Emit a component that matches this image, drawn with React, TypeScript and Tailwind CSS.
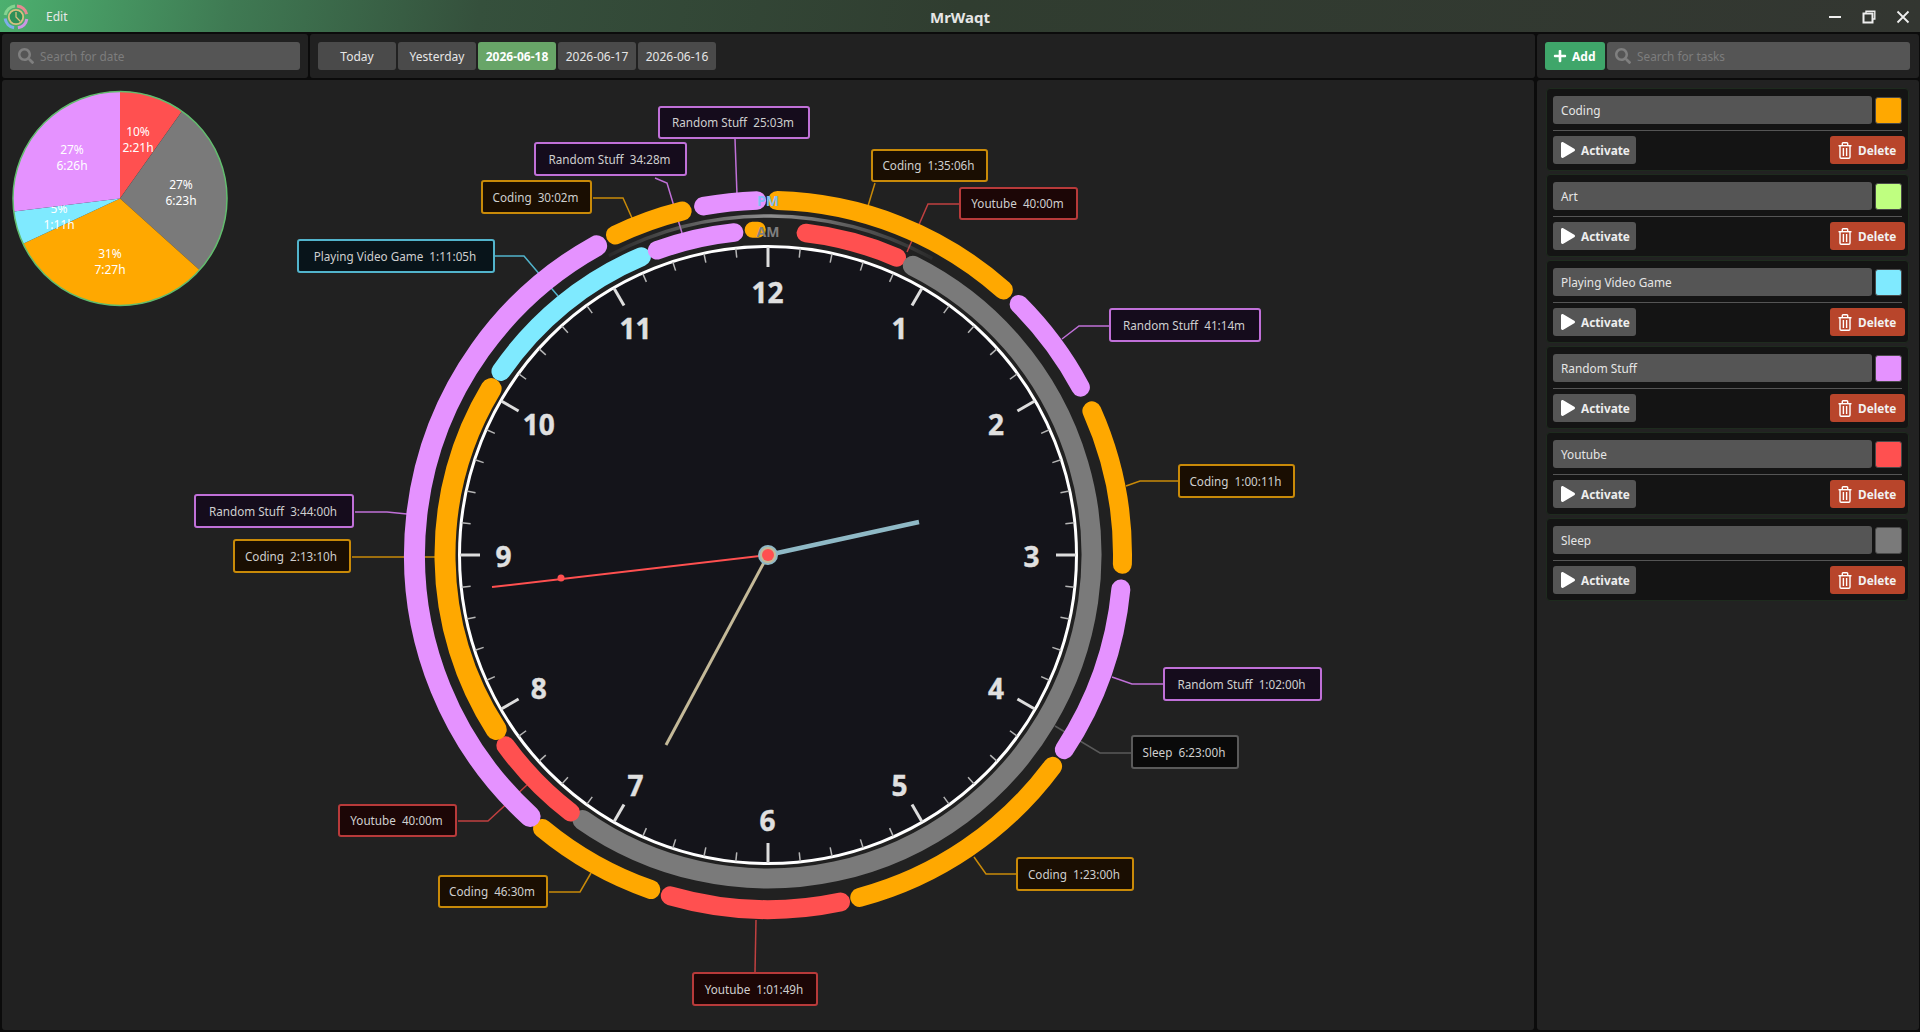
import { FaSearch, FaPlus, FaPlay } from "react-icons/fa";

const CX = 768;
const CY = 555;
const ORANGE = "#ffa800";
const PURPLE = "#e592ff";
const CYAN = "#7feaff";
const RED = "#ff5050";
const GRAY = "#7a7a7a";

const polar = (r: number, deg: number, cx = CX, cy = CY): [number, number] => {
  const a = (deg * Math.PI) / 180;
  return [cx + r * Math.sin(a), cy - r * Math.cos(a)];
};

const arc = (r: number, a: number, b: number, cx = CX, cy = CY) => {
  const [x1, y1] = polar(r, a, cx, cy);
  const [x2, y2] = polar(r, b, cx, cy);
  return `M ${x1} ${y1} A ${r} ${r} 0 ${b - a > 180 ? 1 : 0} 1 ${x2} ${y2}`;
};

const sector = (r: number, a: number, b: number, cx: number, cy: number) => {
  const [x1, y1] = polar(r, a, cx, cy);
  const [x2, y2] = polar(r, b, cx, cy);
  return `M ${cx} ${cy} L ${x1} ${y1} A ${r} ${r} 0 ${b - a > 180 ? 1 : 0} 1 ${x2} ${y2} Z`;
};

const outer: [number, number, string, number][] = [
  [1.5, 41.6, ORANGE, 19],
  [45, 61.8, PURPLE, 18.5],
  [66, 91.5, ORANGE, 19],
  [95.5, 123.3, PURPLE, 19],
  [126.6, 165, ORANGE, 19],
  [168.2, 196, RED, 19],
  [199.3, 219.5, ORANGE, 19],
  [222.3, 331, PURPLE, 21],
  [334.5, 346, ORANGE, 19],
  [349.5, 358.2, PURPLE, 18.5],
];

const inner: [number, number, string, number][] = [
  [6.7, 23.4, RED, 18.5],
  [26.6, 215, GRAY, 20],
  [217.5, 234, RED, 18.5],
  [237.3, 301, ORANGE, 21],
  [304.5, 337, CYAN, 19],
  [340, 354, PURPLE, 18.5],
  [357.3, 358.2, ORANGE, 16],
];

const lines: [string, string][] = [
  ["735,139 737,195", "#c070d8"],
  ["655,178 667,183 682,233", "#c070d8"],
  ["875,183 868,206", "#c98a08"],
  ["959,204 928,204 907,252", "#c04040"],
  ["593,198 623,198 632,218", "#c98a08"],
  ["493,256 524,256 558,296", "#52b4cc"],
  ["1109,326 1079,326 1062,339", "#c070d8"],
  ["1178,481 1140,481 1126,486", "#c98a08"],
  ["1163,684 1132,684 1112,677", "#c070d8"],
  ["1131,753 1100,753 1055,726", "#5a5a5a"],
  ["1016,874 986,874 974,857", "#c98a08"],
  ["755,972 756,920", "#c04040"],
  ["549,892 580,892 591,873", "#c98a08"],
  ["458,821 488,821 527,785", "#c04040"],
  ["352,557 440,557", "#c98a08"],
  ["355,512 387,512 407,514", "#c070d8"],
];

const P = "border-[#c070d8] bg-[#150c1c]";
const O = "border-[#c98a08] bg-[#1a0e02]";
const R = "border-[#b83a3a] bg-[#1c0606]";

const labels: [string, string][] = [
  ["Random Stuff  25:03m", `${P} left-[656px] top-[26px] w-[152px] h-[33px]`],
  ["Random Stuff  34:28m", `${P} left-[532px] top-[62px] w-[153px] h-[34px]`],
  ["Coding  1:35:06h", `${O} left-[869px] top-[69px] w-[117px] h-[33px]`],
  ["Youtube  40:00m", `${R} left-[957px] top-[107px] w-[119px] h-[33px]`],
  ["Coding  30:02m", `${O} left-[479px] top-[100px] w-[111px] h-[34px]`],
  ["Playing Video Game  1:11:05h", `border-[#52b4cc] bg-[#08141a] left-[295px] top-[159px] w-[198px] h-[34px]`],
  ["Random Stuff  41:14m", `${P} left-[1107px] top-[228px] w-[152px] h-[34px]`],
  ["Coding  1:00:11h", `${O} left-[1176px] top-[384px] w-[117px] h-[34px]`],
  ["Random Stuff  1:02:00h", `${P} left-[1161px] top-[587px] w-[159px] h-[34px]`],
  ["Sleep  6:23:00h", `border-[#5a5a5a] bg-[#0a0a0a] left-[1129px] top-[655px] w-[108px] h-[34px]`],
  ["Coding  1:23:00h", `${O} left-[1014px] top-[777px] w-[118px] h-[34px]`],
  ["Youtube  1:01:49h", `${R} left-[690px] top-[892px] w-[126px] h-[34px]`],
  ["Coding  46:30m", `${O} left-[436px] top-[795px] w-[110px] h-[33px]`],
  ["Youtube  40:00m", `${R} left-[336px] top-[724px] w-[119px] h-[33px]`],
  ["Coding  2:13:10h", `${O} left-[231px] top-[459px] w-[118px] h-[34px]`],
  ["Random Stuff  3:44:00h", `${P} left-[192px] top-[414px] w-[160px] h-[34px]`],
];

const tasks: [string, string][] = [
  ["Coding", "bg-[#ffa800]"],
  ["Art", "bg-[#bfff80]"],
  ["Playing Video Game", "bg-[#7feaff]"],
  ["Random Stuff", "bg-[#e592ff]"],
  ["Youtube", "bg-[#ff5050]"],
  ["Sleep", "bg-[#7a7a7a]"],
];

const dates = ["Today", "Yesterday", "2026-06-18", "2026-06-17", "2026-06-16"];

function Logo() {
  return (
    <svg width="26" height="26" viewBox="0 0 26 26" className="ml-[3px] mt-[2px] shrink-0">
      <path d={arc(11, -80, -5, 13, 13)} fill="none" stroke="#85d490" strokeWidth="3" />
      <path d={arc(11, 5, 75, 13, 13)} fill="none" stroke="#e58a92" strokeWidth="3" />
      <path d={arc(11, 100, 170, 13, 13)} fill="none" stroke="#cc96e4" strokeWidth="3" />
      <path d={arc(11, 190, 262, 13, 13)} fill="none" stroke="#7eaeea" strokeWidth="3" />
      <circle cx="13" cy="13" r="7.2" fill="#2f8f58" stroke="#d8c080" strokeWidth="1.8" />
      <path d="M13 8 L13 13 L17.2 17.2" fill="none" stroke="#d8c080" strokeWidth="1.3" />
    </svg>
  );
}

function Trash() {
  return (
    <svg width="14" height="17" viewBox="0 0 14 17" fill="none" stroke="#ffffff" strokeWidth="1.4" className="shrink-0">
      <path d="M0.5 3.7 H13.5" />
      <path d="M4.3 3.5 V1.6 Q4.3 0.8 5.1 0.8 H8.9 Q9.7 0.8 9.7 1.6 V3.5" />
      <path d="M2 3.7 V15 Q2 16.2 3.2 16.2 H10.8 Q12 16.2 12 15 V3.7" />
      <path d="M5.4 6 V14 M8.6 6 V14" />
    </svg>
  );
}

function Pie() {
  const cx = 120;
  const cy = 198.5;
  const r = 107;
  const t = "fill-white text-[12px]";
  const Two = ({ x, y, a, b }: { x: number; y: number; a: string; b: string }) => (
    <>
      <text x={x} y={y} textAnchor="middle" dominantBaseline="central" className={t}>{a}</text>
      <text x={x} y={y + 16} textAnchor="middle" dominantBaseline="central" className={t}>{b}</text>
    </>
  );
  return (
    <>
      <path d={sector(r, 0, 35.4, cx, cy)} fill={RED} />
      <path d={sector(r, 35.4, 132, cx, cy)} fill={GRAY} />
      <path d={sector(r, 132, 245, cx, cy)} fill={ORANGE} />
      <path d={sector(r, 245, 263, cx, cy)} fill={CYAN} />
      <text x={59} y={208} textAnchor="middle" dominantBaseline="central" className={t}>5%</text>
      <path d={sector(r, 263, 360, cx, cy)} fill={PURPLE} />
      <text x={59} y={224} textAnchor="middle" dominantBaseline="central" className={t}>1:11h</text>
      <Two x={138} y={131} a="10%" b="2:21h" />
      <Two x={181} y={184} a="27%" b="6:23h" />
      <Two x={110} y={253} a="31%" b="7:27h" />
      <Two x={72} y={149} a="27%" b="6:26h" />
      <circle cx={cx} cy={cy} r={r} fill="none" stroke="#62bd6e" strokeWidth="1.5" />
    </>
  );
}

function Clock() {
  const ticks = Array.from({ length: 60 }, (_, i) => i * 6);
  return (
    <>
      <defs>
        <linearGradient id="track" gradientUnits="userSpaceOnUse" x1="608" y1="0" x2="934" y2="0">
          <stop offset="0" stopColor="#8a8a8a" stopOpacity="0.08" />
          <stop offset="0.5" stopColor="#8f8f8f" stopOpacity="1" />
          <stop offset="1" stopColor="#8a8a8a" stopOpacity="0.08" />
        </linearGradient>
      </defs>
      {lines.map(([p, c]) => (
        <polyline key={p} points={p} fill="none" stroke={c} strokeWidth="1.5" />
      ))}
      <path d={arc(339, -28, 29)} fill="none" stroke="url(#track)" strokeWidth="3.5" />
      <circle cx={CX} cy={CY} r={308.5} fill="#14141a" stroke="#ffffff" strokeWidth="3" />
      {ticks.map((d) => {
        const major = d % 30 === 0;
        const [x1, y1] = polar(308, d);
        const [x2, y2] = polar(major ? 288 : 299, d);
        return (
          <line key={d} x1={x1} y1={y1} x2={x2} y2={y2} stroke={major ? "#dddddd" : "#b5b5b5"} strokeWidth={major ? 3 : 1.5} />
        );
      })}
      {Array.from({ length: 12 }, (_, i) => i + 1).map((n) => {
        const [x, y] = polar(264, n * 30);
        return (
          <text
            key={n}
            x={x - 0.6}
            y={y + 1.2}
            textAnchor="middle"
            dominantBaseline="central"
            stroke="#e0e0e0"
            strokeWidth="0.4"
            className="fill-[#e0e0e0] text-[28px] font-bold"
          >
            {n}
          </text>
        );
      })}
      {inner.map(([a, b, c, w]) => (
        <path key={`i${a}`} d={arc(333.5 - w / 2, a, b)} fill="none" stroke={c} strokeWidth={w} strokeLinecap="round" />
      ))}
      {outer.map(([a, b, c, w]) => (
        <path key={`o${a}`} d={arc(364 - w / 2, a, b)} fill="none" stroke={c} strokeWidth={w} strokeLinecap="round" />
      ))}
      <text x={768} y={200} textAnchor="middle" dominantBaseline="central" className="fill-[#84bdf5] text-[14px] font-bold">PM</text>
      <text x={768} y={231} textAnchor="middle" dominantBaseline="central" className="fill-[#7f7f7f] text-[14px] font-bold">AM</text>
      <line x1={CX} y1={CY} x2={919} y2={522} stroke="#8fb9c6" strokeWidth="4.5" />
      <line x1={CX} y1={CY} x2={666} y2={745} stroke="#c4b998" strokeWidth="3" />
      <line x1={CX} y1={CY} x2={492} y2={587} stroke={RED} strokeWidth="2" />
      <circle cx={561} cy={578} r="3.5" fill={RED} />
      <circle cx={CX} cy={CY} r="10" fill="#8fb9c6" />
      <circle cx={CX} cy={CY} r="8" fill="#c4b998" />
      <circle cx={CX} cy={CY} r="6" fill={RED} />
    </>
  );
}

function SearchBox({ text, className }: { text: string; className: string }) {
  return (
    <div className={`h-7 flex items-center gap-[6px] pl-2 rounded-[3px] bg-[#555555] text-[11.8px] text-[#7d7d7d] ${className}`}>
      <FaSearch className="w-4 h-4 text-[#7f7f7f]" />
      <span className="pt-[2px]">{text}</span>
    </div>
  );
}

function TaskCard({ name, swatch }: { name: string; swatch: string }) {
  return (
    <div className="h-[83px] pl-[6px] pr-[3px] pt-[7px] rounded-[4px] bg-[#141414] border border-[#1e2b1e] flex flex-col">
      <div className="flex items-center gap-[3px] pr-[3px]">
        <div className="h-7 flex-1 rounded-[3px] bg-[#555555] px-2 pt-[2px] flex items-center text-[11.8px] text-[#e6e6e6]">{name}</div>
        <div className={`w-[27px] h-[27px] rounded-[3px] border border-[#4a4a4a] ${swatch}`} />
      </div>
      <div className="h-px bg-[#555555] mt-[6px] mr-[3px]" />
      <div className="flex justify-between mt-[5px]">
        <div className="h-7 w-[83px] rounded-[3px] bg-[#555555] flex items-center pl-2 gap-[6px] text-[11.8px] font-bold text-[#eeeeee]">
          <FaPlay className="w-[14px] h-4 text-white" />
          <span className="pt-[2px]">Activate</span>
        </div>
        <div className="h-7 w-[75px] rounded-[3px] bg-[#b8452b] flex items-center pl-2 gap-[6px] text-[11.8px] font-bold text-[#f2f2f2]">
          <Trash />
          <span className="pt-[2px]">Delete</span>
        </div>
      </div>
    </div>
  );
}

export default function App() {
  return (
    <div className="w-[1920px] h-[1032px] flex flex-col overflow-hidden bg-[#0b0b0b] font-['Noto_Sans',sans-serif]">
      <header className="relative h-8 shrink-0 flex items-center bg-[linear-gradient(100deg,#4cb06f_0%,#3f7a53_12%,#35503c_25%,#303d30_50%,#333631_100%)]">
        <Logo />
        <span className="ml-[17px] pt-[2px] text-[12px] text-[#e8e8e8]">Edit</span>
        <span className="absolute left-0 right-0 pt-[2px] text-center text-[15px] font-bold text-[#e6e6e6]">MrWaqt</span>
        <div className="ml-auto mt-[2px] flex items-center gap-[20px] pr-[10px]">
          <svg width="14" height="14" viewBox="0 0 14 14">
            <path d="M1 7 H13" stroke="#eeeeee" strokeWidth="2" />
          </svg>
          <svg width="14" height="14" viewBox="0 0 14 14" fill="none" stroke="#eeeeee">
            <path d="M4 3 V1.2 H12.8 V9 H11" strokeWidth="1.4" />
            <rect x="1.5" y="3.5" width="9" height="9" strokeWidth="2" />
          </svg>
          <svg width="14" height="14" viewBox="0 0 14 14">
            <path d="M1.5 1.5 L12.5 12.5 M12.5 1.5 L1.5 12.5" stroke="#eeeeee" strokeWidth="1.8" />
          </svg>
        </div>
      </header>

      <div className="h-11 mt-[2px] shrink-0 flex gap-[2px] pl-[2px] pr-[1px]">
        <div className="w-[306px] shrink-0 rounded-[3px] bg-[#212121] px-2 flex items-center">
          <SearchBox text="Search for date" className="w-[290px]" />
        </div>
        <div className="w-[1225px] shrink-0 rounded-[3px] bg-[#212121] px-2 flex items-center gap-[2px]">
          {dates.map((d, i) => (
            <div
              key={d}
              className={
                i === 2
                  ? "w-[78px] h-7 pt-[2px] rounded-[3px] bg-[#68a568] flex items-center justify-center text-[12px] font-bold text-white"
                  : "w-[78px] h-7 pt-[2px] rounded-[3px] bg-[#4a4a4a] flex items-center justify-center text-[12px] text-[#e6e6e6]"
              }
            >
              {d}
            </div>
          ))}
        </div>
        <div className="flex-1 rounded-[3px] bg-[#212121] pl-2 pr-[9px] flex items-center gap-[2px]">
          <div className="w-[60px] h-7 rounded-[3px] bg-[#3fa66a] flex items-center pl-2 gap-[5px] text-[12px] font-bold text-white">
            <FaPlus className="w-[14px] h-[14px]" />
            <span className="pt-[2px]">Add</span>
          </div>
          <SearchBox text="Search for tasks" className="flex-1" />
        </div>
      </div>

      <div className="flex-1 mt-[2px] mb-[2px] flex gap-[3px] pl-[2px] pr-[1px] min-h-0">
        <main className="relative w-[1532px] shrink-0 rounded-[3px] bg-[#212121]">
          <svg className="absolute left-0 top-0" width="1532" height="950" viewBox="2 80 1532 950">
            <Pie />
            <Clock />
          </svg>
          {labels.map(([text, cls]) => (
            <div
              key={text + cls}
              className={`absolute flex items-center justify-center pt-[1px] pr-[2px] rounded-[3px] border-2 text-[11.7px] text-[#cfcfcf] whitespace-pre ${cls}`}
            >
              {text}
            </div>
          ))}
        </main>
        <aside className="flex-1 min-w-0 rounded-[3px] bg-[#222222] pl-[9px] pr-[10px] pt-2 flex flex-col gap-[3px]">
          {tasks.map(([n, s]) => (
            <TaskCard key={n} name={n} swatch={s} />
          ))}
        </aside>
      </div>
    </div>
  );
}
